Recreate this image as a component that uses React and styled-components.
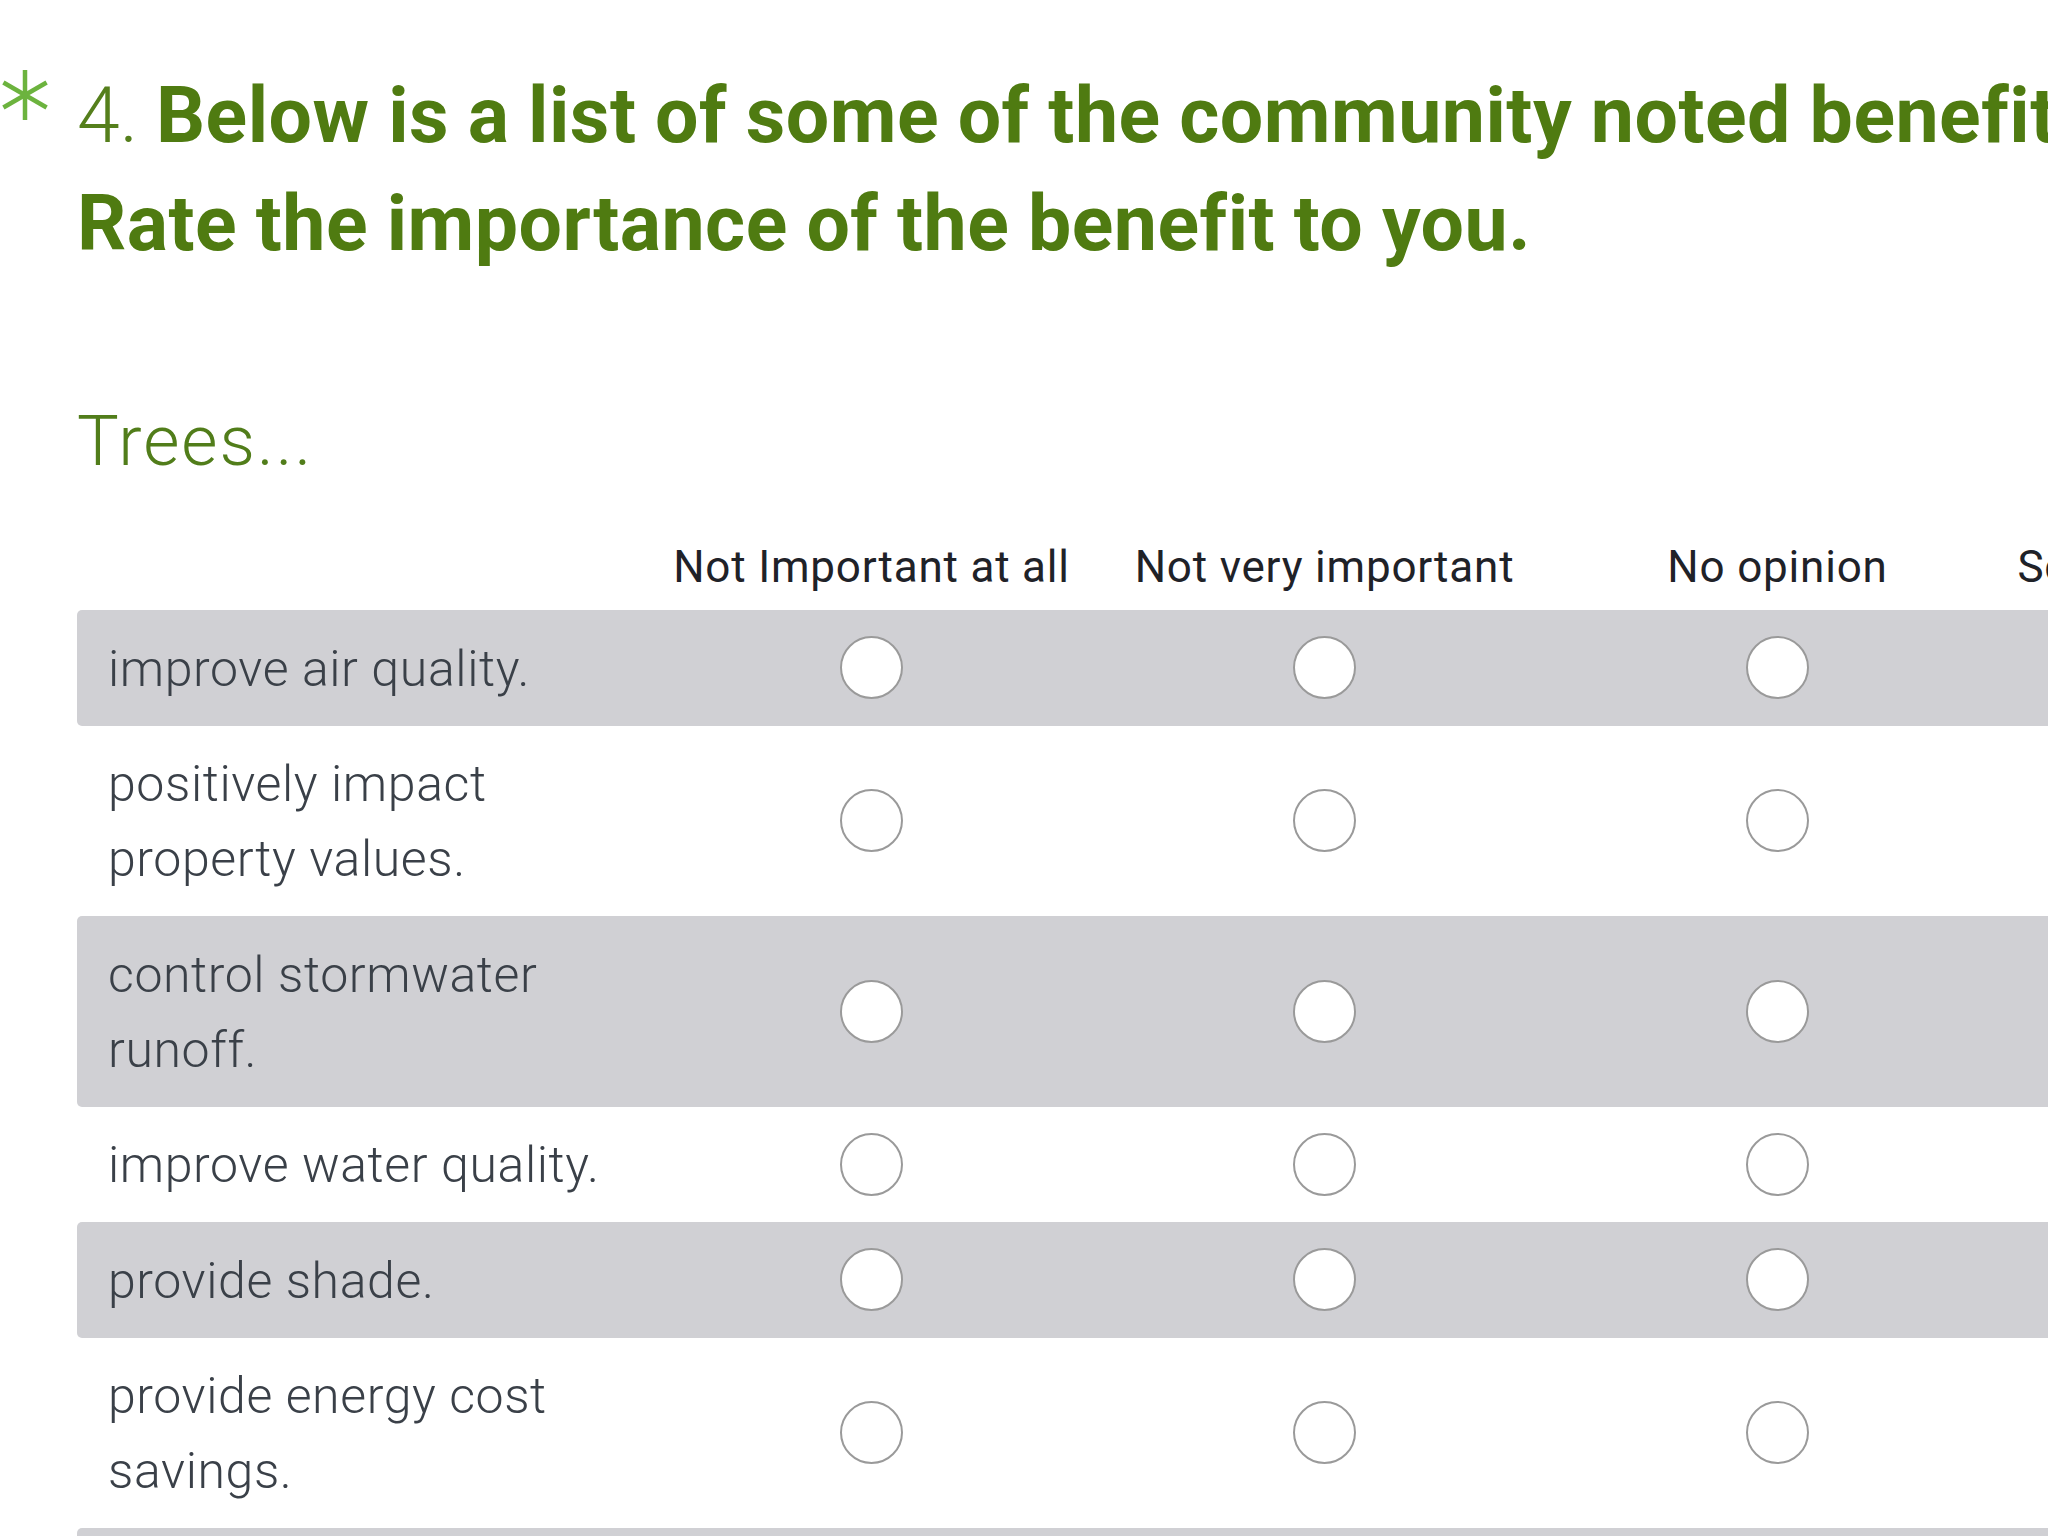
import React from 'react';
import styled, { createGlobalStyle } from 'styled-components';

const COLUMNS = [
  'Not Important at all',
  'Not very important',
  'No opinion',
  'Somewhat important',
  'Very important',
];

const ROWS = [
  'improve air quality.',
  'positively impact property values.',
  'control stormwater runoff.',
  'improve water quality.',
  'provide shade.',
  'provide energy cost savings.',
  'reduce noise.',
];

const App = () => {
  return (
    <>
      <GlobalStyle />
      <Page>
        <Required>
          <svg width="50" height="50" viewBox="0 0 50 50">
            <g stroke="#6cb33e" strokeWidth="4.5" strokeLinecap="butt">
              <line x1="25" y1="0" x2="25" y2="50" />
              <line x1="3.4" y1="12.5" x2="46.6" y2="37.5" />
              <line x1="3.4" y1="37.5" x2="46.6" y2="12.5" />
            </g>
          </svg>
        </Required>
        <Question>
          <Title>
            <Number>4. </Number>
            Below is a list of some of the community noted benefits of trees.
            <br />
            Rate the importance of the benefit to you.
          </Title>
          <Subtitle>Trees...</Subtitle>
          <Matrix>
            <HeaderRow>
              <span />
              {COLUMNS.map((col) => (
                <HeaderCell key={col}>{col}</HeaderCell>
              ))}
            </HeaderRow>
            {ROWS.map((row, index) => (
              <Row key={row} $shaded={index % 2 === 0}>
                <Label>{row}</Label>
                {COLUMNS.map((col) => (
                  <Cell key={col}>
                    <Radio />
                  </Cell>
                ))}
              </Row>
            ))}
          </Matrix>
        </Question>
      </Page>
    </>
  );
};

const GlobalStyle = createGlobalStyle`
  html, body {
    margin: 0;
    padding: 0;
    background: #ffffff;
    overflow: hidden;
  }
  body {
    font-family: Roboto, "Liberation Sans", sans-serif;
  }
`;

const Page = styled.div`
  display: grid;
  grid-template-columns: 77px max-content;
  width: 2048px;
  height: 1536px;
  padding-top: 62px;
  box-sizing: border-box;
  overflow: hidden;
`;

const Required = styled.div`
  padding-top: 8px;
  line-height: 0;
`;

const Question = styled.div`
  display: flex;
  flex-direction: column;
`;

const Title = styled.h1`
  margin: 0;
  font-size: 77px;
  line-height: 108px;
  font-weight: 700;
  letter-spacing: 0.5px;
  word-spacing: -1px;
  color: #4f7b11;
  white-space: nowrap;
`;

const Number = styled.span`
  font-weight: 300;
  letter-spacing: 0;
  color: #557f1c;
`;

const Subtitle = styled.h2`
  margin: 121px 0 0;
  font-size: 70px;
  line-height: 84px;
  font-weight: 300;
  letter-spacing: 2px;
  color: #517d1a;
`;

const Matrix = styled.div`
  margin-top: 54px;
  display: flex;
  flex-direction: column;
`;

const HeaderRow = styled.div`
  display: grid;
  grid-template-columns: 568px repeat(5, 453px);
  align-items: end;
`;

const HeaderCell = styled.div`
  text-align: center;
  font-size: 44px;
  line-height: 60px;
  letter-spacing: 0.8px;
  padding-bottom: 13px;
  color: #1f2228;
  white-space: nowrap;
`;

const Row = styled.div`
  display: grid;
  grid-template-columns: 568px repeat(5, 453px);
  align-items: center;
  padding: 18.5px 0 19px;
  border-radius: 5px;
  background: ${(props) => (props.$shaded ? '#d0d0d4' : 'transparent')};
`;

const Label = styled.div`
  padding: 3px 17px 0 31px;
  font-size: 50px;
  line-height: 75px;
  font-weight: 300;
  letter-spacing: 0.6px;
  color: #3a4048;
`;

const Cell = styled.div`
  display: flex;
  justify-content: center;
  align-items: center;
`;

const Radio = styled.span`
  display: block;
  width: 63px;
  height: 63px;
  box-sizing: border-box;
  border-radius: 50%;
  border: 2.5px solid #9a9a9a;
  background: #ffffff;
`;

export default App;
